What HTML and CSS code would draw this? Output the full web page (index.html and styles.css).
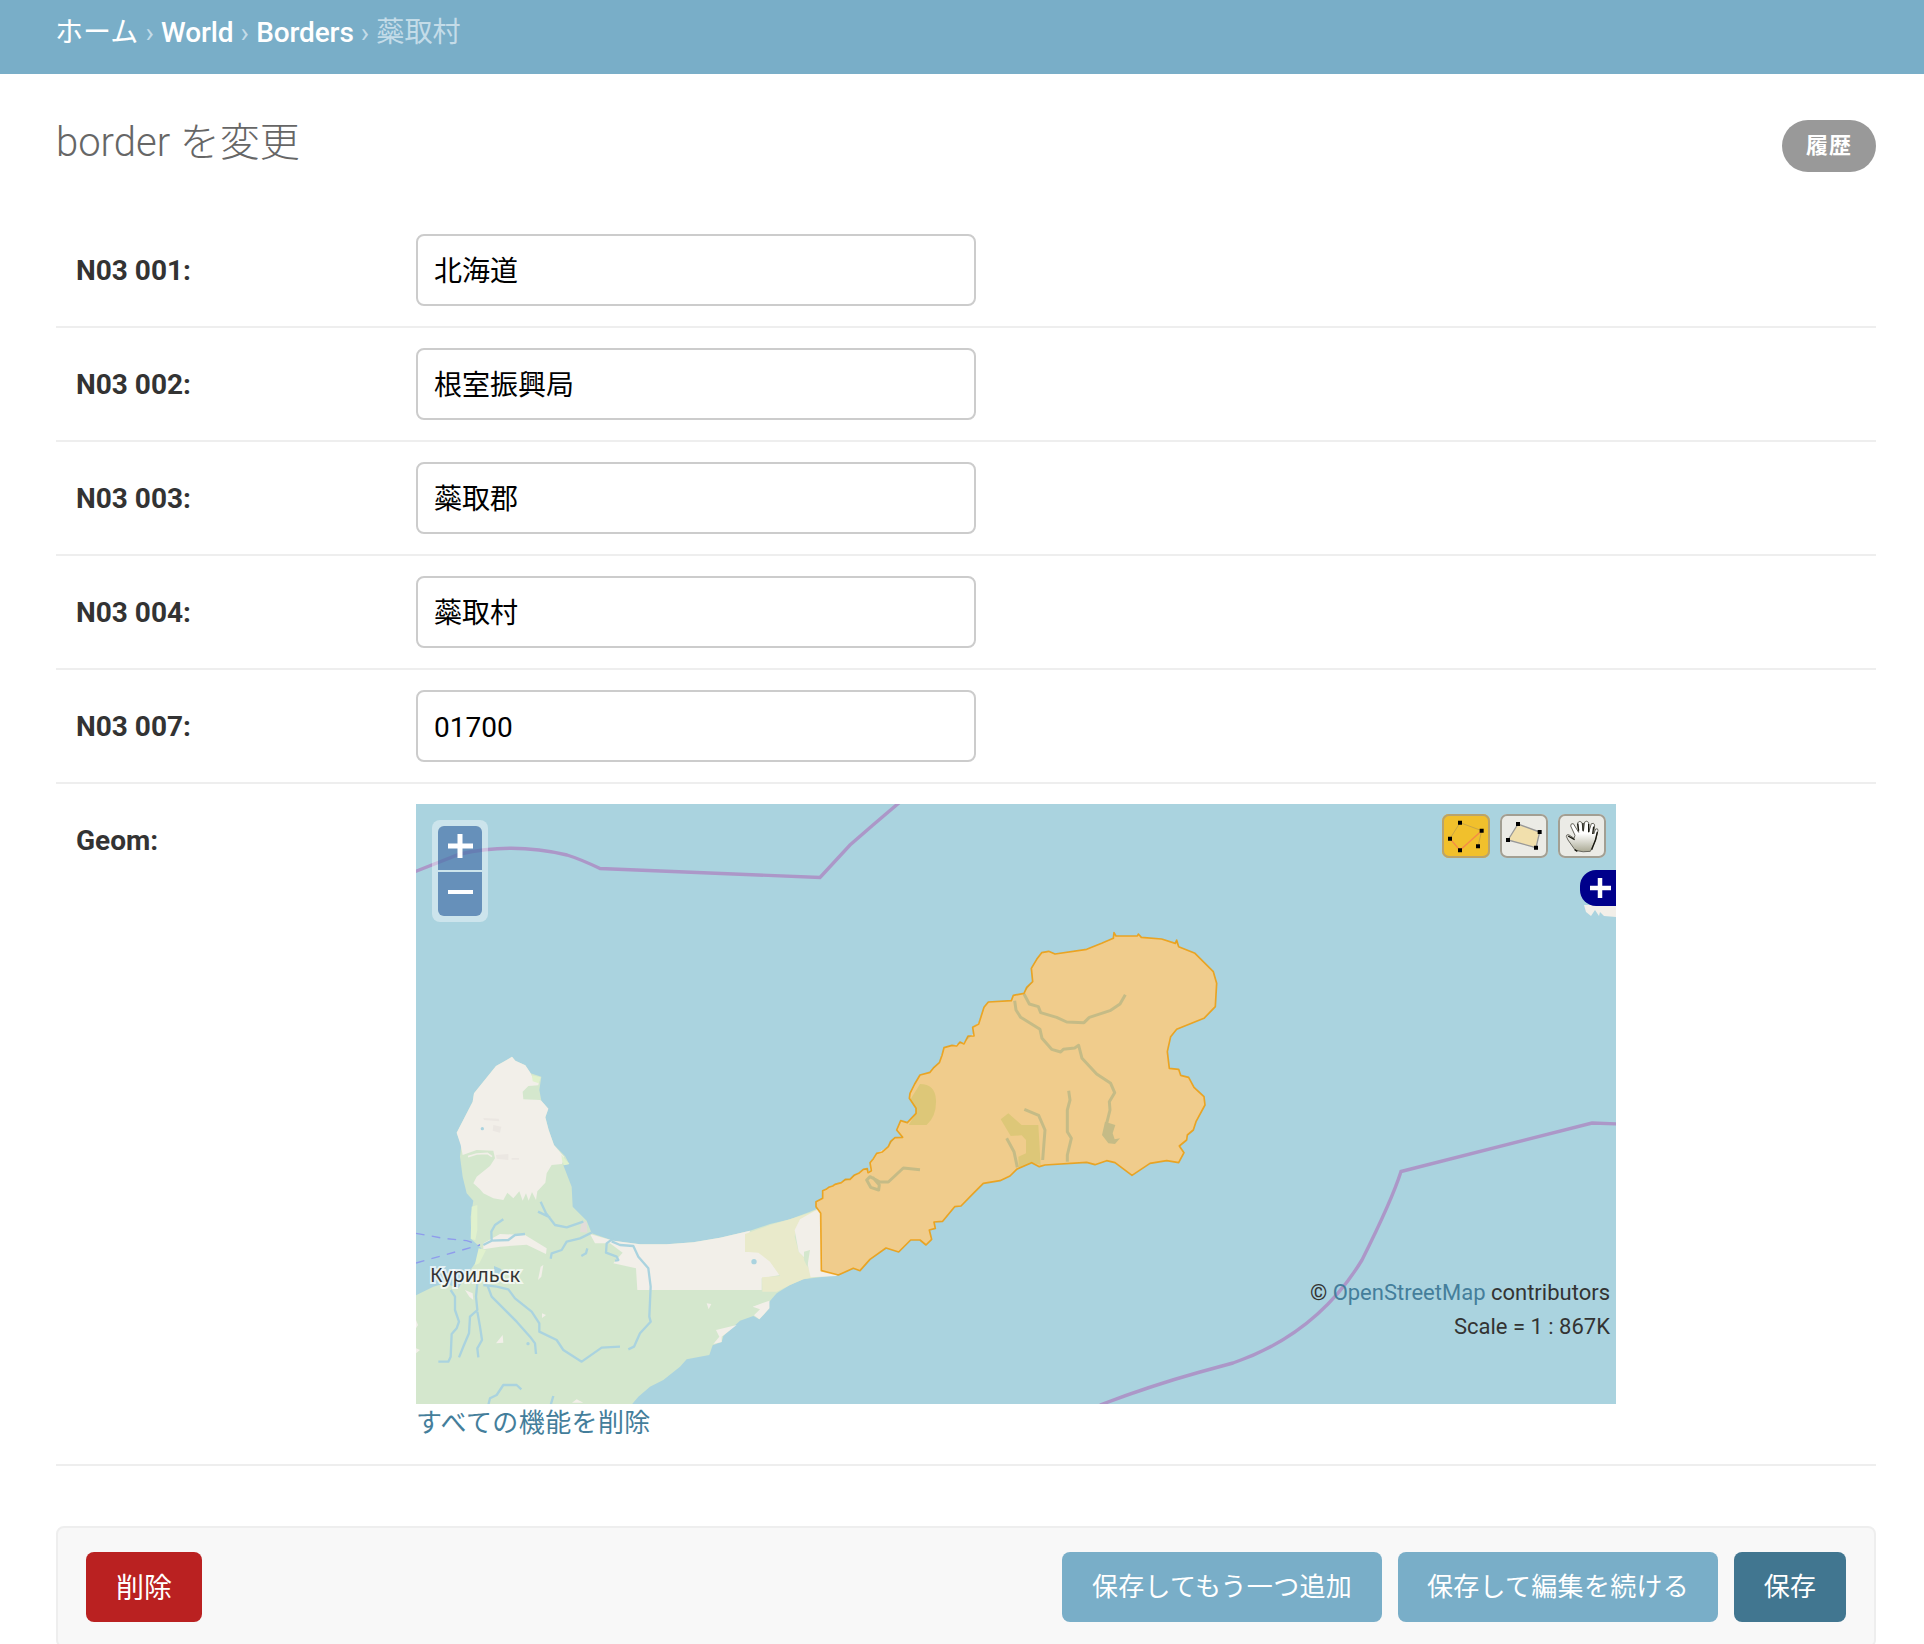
FILE: index.html
```html
<!DOCTYPE html>
<html lang="ja">
<head>
<meta charset="utf-8">
<title>border を変更</title>
<link rel="stylesheet" href="styles.css">
</head>
<body>
<nav class="breadcrumbs"><a href="#">ホーム</a> › <a class="latin" href="#">World</a> › <a class="latin" href="#">Borders</a> › 蘂取村</nav>
<main class="content">
  <header class="title-row">
    <h1>border を変更</h1>
    <a class="history" href="#">履歴</a>
  </header>
  <form class="form">
    <div class="row"><label for="f1">N03 001:</label><input id="f1" type="text" value="北海道"></div>
    <div class="row"><label for="f2">N03 002:</label><input id="f2" type="text" value="根室振興局"></div>
    <div class="row"><label for="f3">N03 003:</label><input id="f3" type="text" value="蘂取郡"></div>
    <div class="row"><label for="f4">N03 004:</label><input id="f4" type="text" value="蘂取村"></div>
    <div class="row"><label for="f7">N03 007:</label><input class="latin" id="f7" type="text" value="01700"></div>
    <div class="row geom">
      <label>Geom:</label>
      <div>
        <div class="map">
          <svg class="tiles" viewBox="416 804 1200 600" width="1200" height="600">
            <g transform="translate(400 1030) scale(.33333)">
              <!-- mainland -->
              <path class="wood" d="M48 796L100 770 135 760 175 775 210 722 232 690 244 655 214 628 212 560 220 512 200 490 188 440 180 380 184 345 170 308 218 215 222 190 288 108 320 90 336 80 346 92 376 106 392 130 424 140 418 180 424 212 445 236 436 262 446 300 462 345 495 378 508 402 490 406 515 470 518 530 560 572 575 610 640 632 720 643 800 643 880 637 960 623 1050 602 1110 582 1170 568 1230 545 1280 524 1310 525 1310 735 1260 742 1210 748 1170 765 1130 790 1108 815 1108 835 1078 868 1060 858 1020 872 970 918 965 936 938 946 928 975 860 988 840 1010 790 1050 750 1070 715 1100 690 1130H48z"/>
              <path class="land" d="M188 375L182 345 170 308 218 215 222 190 288 108 320 90 336 80 346 92 376 106 392 130 400 148 418 150 415 166 385 168 368 185 370 208 420 210 424 212 445 236 436 262 446 300 462 345 492 380 486 402 455 405 440 430 436 458 412 484 408 510 396 486 386 512 378 490 368 512 358 484 340 505 322 488 310 510 280 505 250 490 240 478 220 460 230 440 270 408 285 385 280 362 230 360z"/>
              <path class="land" d="M570 612L640 632 720 643 800 643 880 637 960 623 1050 602 1035 665 1090 665 1140 735 1085 745 1085 780H712L708 715 640 700 668 668 630 640 585 640zM250 640L300 612 375 615 440 655 438 672 380 644 300 650 250 658zM1058 830L1108 812 1108 835 1078 868 1062 856 1080 838zM948 900L1010 885 965 920 965 936 940 942 958 920zM422 710L430 705 424 740 414 750zM426 850L438 855 426 864zM195 780L218 790 220 810 208 800zM920 820L934 822 926 838zM288 940L308 915 310 938zM516 1118L530 1108 550 1118zM48 870L54 885 48 895zM48 955L60 960 48 970z"/>
              <path class="sand" d="M1035 612L1110 585 1170 568 1230 548 1280 524V580L1190 590 1184 620 1196 665 1210 680 1238 742 1210 748 1170 765 1130 785H1087L1086 742 1140 738 1110 695 1075 668 1035 665z"/>
              <path class="land" d="M1200 568L1240 545 1310 515V738L1232 742 1220 690 1196 665 1184 600z"/>
              <path class="wood" d="M1212 665L1230 660 1222 710 1212 690z"/>
              <path class="meadow" d="M396 136L422 142 416 160 398 154zM215 530L232 525 232 600 226 630 212 626zM236 655L258 660 238 700 224 706zM484 374L508 402 492 406 486 390z"/>
              <path class="rock" d="M545 575L560 575 562 608 540 606z"/>
              <path class="scree" d="M288 375L325 372V390L290 386zM280 285L304 290 300 308 278 302zM250 264L296 266 298 274 252 270zM335 384h22v5h-22z"/>
              <path class="land-line" d="M204 380L230 372 262 370 276 380"/>
              <path class="river" d="M310 568L285 585 274 605 275 634M250 645L275 632 325 630 345 615 375 612M422 515L438 550 465 585 500 592 550 575M414 545L450 562M575 608L540 625 500 635 485 660 455 670 452 686M562 655L558 670 544 678M640 625L620 640 618 668 650 680 655 690 645 692M635 634L660 645 700 648 715 680 745 715 752 770 748 860 752 875 720 910 702 950 685 958M152 780L165 800 165 840 177 875 170 895 155 912 152 980 145 995 115 995M232 760L228 800 232 840 210 860 207 910 192 945 177 982M232 845L240 890 246 930 232 955 235 982M250 765L290 770 325 778 345 805 395 845 418 880 418 905 470 930 490 960 545 995 605 953 660 950M262 765L275 800 320 845 350 875 390 920 405 940 408 972M265 1125L270 1105 290 1095 310 1065 350 1065 364 1078M460 1098L452 1125"/>
              <circle class="lake" cx="247" cy="296" r="5"/><circle class="lake" cx="1062" cy="695" r="8"/><circle class="lake" cx="384" cy="941" r="5"/>
              <path class="lake" d="M282 708l20 8 12 20-32-8z"/>
              <path class="ferry" d="M48 610L130 625 200 632 240 645M48 699L130 676 240 645"/>
            </g>
            <path class="land" d="M1584 905h32v12l-12-1-4-4-1 4-4-6-4 6-5-4z"/>
            <g transform="translate(780 900) scale(.33333)">
              <path class="land" id="island" d="M124 1112L122 940 108 920 108 905 128 895 128 872 165 853 210 838 250 808 272 815 270 788 290 760 325 740 345 713 368 712 350 690 362 662 382 668 408 640 408 625 388 595 390 580 420 525 450 517 478 488 492 443 552 428 582 400 578 382 596 368 612 322 625 306 694 302 700 286 732 280 758 245 754 205 785 158 806 154 825 162 920 148 965 130 1000 115 1002 98 1008 108 1072 108 1075 102 1084 112 1145 117 1190 130 1196 140 1245 160 1300 215 1310 250 1306 320 1272 355 1190 388 1172 410 1162 455 1168 505 1196 508 1202 526 1226 532 1242 562 1272 590 1275 615 1248 665 1240 690 1222 705 1220 720 1198 738 1212 758 1196 788 1160 782 1110 790 1056 826 1005 788 980 782 945 794 920 787 795 795 778 800 755 788 710 808 690 828 660 842 610 850 580 880 543 918 524 920 488 964 462 966 466 985 448 990 455 1018 438 1035 420 1020 392 1020 356 1056 318 1044 270 1078 240 1112 220 1105 175 1125z"/>
              <path class="dense" d="M420 552Q466 552 468 600T440 675L386 675 408 640 408 625 390 600zM685 640L725 675 775 675 782 795 755 788 716 804 715 770 738 760 738 720 725 706 692 708 662 658z"/>
              <path class="river wide" d="M732 282L748 312 775 320 782 338 830 352 860 366 912 368 928 352 990 332 1020 312 1036 284M704 302L708 330 722 352 780 388 786 415 815 448 842 456 850 448 884 444 896 436 906 475 950 522 992 550 1004 578 988 605 990 630 980 670M866 572L870 600 862 630 862 695 874 715 862 765 862 785M733 628L776 646 795 690 788 780M680 715L702 755 712 802M420 809L370 804 325 846 300 846 270 830 260 840 272 862 296 870 298 855 278 832"/>
              <path class="lake" d="M975 665L1006 675 998 700 1004 718 1020 715 1005 732 985 730 966 705z"/>
              <path class="feature" d="M124 1112L122 940 108 920 108 905 128 895 128 872 138 868 146 862 158 858 165 853 184 848 196 838 210 838 222 826 236 820 250 808 262 806 264 818 274 812 270 788 280 776 290 760 306 756 325 740 332 724 345 713 368 712 350 690 362 662 382 668 408 640 408 625 388 595 390 580 404 552 420 525 450 517 462 502 478 488 486 466 492 443 516 436 530 438 540 426 552 432 564 408 582 408 578 382 596 372 612 322 625 306 694 302 700 286 732 280 740 262 758 245 754 205 770 178 785 158 806 154 825 162 920 148 965 130 1000 115 1002 98 1008 108 1072 108 1075 102 1084 112 1145 117 1186 130 1190 120 1196 140 1245 160 1300 215 1310 250 1306 320 1272 355 1190 388 1172 410 1162 455 1168 505 1196 508 1202 526 1226 532 1242 562 1272 590 1275 615 1248 665 1240 690 1222 705 1220 720 1198 738 1212 758 1196 788 1160 782 1110 790 1056 826 1005 788 980 782 945 794 920 787 795 795 778 800 755 788 710 808 690 828 660 842 610 850 580 880 543 918 524 920 488 964 462 966 466 985 448 990 455 1018 438 1035 420 1020 392 1020 356 1056 318 1044 270 1078 240 1112 220 1105 175 1125z"/>
            </g>
            <path class="boundary" d="M414 872L460 854Q513 842 567 855Q580 859 600 868.5L820 877.5 850 845 873 825 900 802M1618 1124L1592 1123 1401 1171.5Q1392 1200 1362 1260Q1317 1334 1233 1363L1200 1372Q1150 1386 1100 1405"/>
            <text class="place" x="430" y="1281.5">Курильск</text>
          </svg>
          <div class="zoom"><button type="button" aria-label="+"><svg width="44" height="44"><path d="M10 20H35M22 8V32" stroke="#fff" stroke-width="5"/></svg></button><button type="button" aria-label="−"><svg width="44" height="44"><path d="M10 20H35" stroke="#fff" stroke-width="4"/></svg></button></div>
          <div class="tools">
            <button class="active" type="button"><svg viewBox="426 72 144 132" width="48" height="44" fill="none"><path d="M450 146L480 98 545 122 534 169" stroke="#c9a545" stroke-width="3"/><path d="M450 146L480 181 545 122" stroke="#f58a48" stroke-width="4"/><path d="M474 92h12v12h-12zM539 116h12v12h-12zM444 140h12v12h-12zM474 175h12v12h-12zM528 163h12v12h-12z" fill="#000"/></svg></button>
            <button type="button"><svg viewBox="600 72 144 132" width="48" height="44"><path d="M624 150L654 102 719 126 708 173z" fill="#f1dfac" stroke="#999" stroke-width="4"/><path d="M648 96h12v12h-12zM713 120h12v12h-12zM618 144h12v12h-12zM702 167h12v12h-12z" fill="#000"/></svg></button>
            <button type="button"><svg viewBox="774 72 144 132" width="48" height="44"><defs><linearGradient id="palm" x2="0" y2="1"><stop offset=".4" stop-color="#fff"/><stop offset="1" stop-color="#aaa994"/></linearGradient></defs><path d="M826 181L804 150 799 139Q799 133 806 134L822 145 825 136 812 108Q812 99 820 101L836 127 833 98Q840 90 846 98L850 124 854 96Q861 90 866 98L866 127 874 101Q882 97 884 105L881 132 887 117Q894 114 894 121L887 151 871 184Q850 188 826 181z" fill="url(#palm)" stroke="#68675e" stroke-width="3"/><path d="M833 101L836 122M849 99V122M866 102V126M881 110L878 132M892 126L886 151 875 179M804 138L824 149M824 179L832 184" fill="none" stroke="#17170f" stroke-width="4"/></svg></button>
          </div>
          <button class="layers" type="button" aria-label="+"><svg width="36" height="36"><path d="M10 18H31M20 8V28" stroke="#fff" stroke-width="4.5"/></svg></button>
          <div class="credits"><p>© <a href="#">OpenStreetMap</a> contributors</p><p>Scale = 1 : 867K</p></div>
        </div>
        <a class="clear" href="#">すべての機能を削除</a>
      </div>
    </div>
    <div class="submit-row">
      <a class="btn delete" href="#">削除</a>
      <button class="btn" type="button">保存してもう一つ追加</button>
      <button class="btn" type="button">保存して編集を続ける</button>
      <button class="btn primary" type="button">保存</button>
    </div>
  </form>
</main>
</body>
</html>
```

FILE: styles.css
```css
* { box-sizing: border-box; }
body {
  margin: 0;
  height: 1644px;
  overflow: hidden;
  background: #fff;
  color: #333;
  font-family: Roboto, "Noto Sans CJK JP", sans-serif;
  font-size: 28px;
}
a { color: #447e9b; text-decoration: none; }
button { font-family: inherit; border: 0; padding: 0; }

.breadcrumbs {
  height: 74px;
  padding: 12px 55px 0;
  background: #79aec8;
  color: #c4dce8;
  line-height: 42px;
  letter-spacing: .1px;
  white-space: nowrap;
}
.breadcrumbs a { color: #fff; }
.breadcrumbs .latin { font-weight: 500; letter-spacing: -.1px; }

.content { padding: 0 48px 0 56px; }
.title-row {
  display: flex;
  justify-content: space-between;
  align-items: flex-start;
  height: 140px;
  padding-top: 46px;
}
h1 {
  margin: -3px 0 0;
  color: #666;
  font-size: 40px;
  font-weight: 300;
  line-height: 52px;
}
.history {
  width: 94px;
  height: 52px;
  border-radius: 26px;
  background: #999;
  color: #fff;
  font-size: 22px;
  font-weight: 700;
  letter-spacing: 1px;
  line-height: 51px;
  text-align: center;
}

.row {
  display: flex;
  align-items: flex-start;
  padding: 20px 0 20px 20px;
  border-bottom: 2px solid #eee;
}
.row label {
  flex: 0 0 340px;
  font-weight: 700;
  line-height: 74px;
  height: 72px;
}
.row input {
  width: 560px;
  height: 72px;
  padding: 0 16px 3px;
  border: 2px solid #ccc;
  border-radius: 8px;
  background: #fff;
  color: #000;
  font: inherit;
}
.row input.latin { padding: 3px 16px 0; }
.geom { height: 682px; }

.map {
  position: relative;
  width: 1200px;
  height: 600px;
  background: #aad3df;
  overflow: hidden;
}
.tiles { display: block; }
.land { fill: #f2efe9; }
.wood { fill: #d4e7cd; }
.dense { fill: #d3e7c8; }
.sand { fill: #e9eacb; }
.meadow { fill: #e0f1cd; }
.rock { fill: #e2dcd9; }
.scree { fill: #ebe7e2; }
.lake { fill: #aad3df; }
.land-line { fill: none; stroke: #f2efe9; stroke-width: 5; }
.river { fill: none; stroke: #aad3df; stroke-width: 7; stroke-linejoin: round; }
.river.wide { stroke-width: 9; }
.ferry { fill: none; stroke: #8f9cec; stroke-width: 4; stroke-dasharray: 26 22; }
.feature { fill: #e90; fill-opacity: .4; stroke: #e90; stroke-width: 5; stroke-opacity: .8; stroke-linejoin: round; }
.boundary { fill: none; stroke: #ac97c8; stroke-width: 3.4; }
.place {
  fill: #333;
  stroke: #fff;
  stroke-opacity: .7;
  stroke-width: 4px;
  paint-order: stroke;
  font-family: "Noto Sans", sans-serif;
  font-size: 20px;
}

.zoom {
  position: absolute;
  left: 16px;
  top: 16px;
  display: grid;
  gap: 2px;
  padding: 6px;
  border-radius: 8px;
  background: rgba(255, 255, 255, .4);
}
.zoom button { width: 44px; height: 44px; background: rgba(0, 60, 136, .5); }
.zoom button:first-child { border-radius: 6px 6px 0 0; }
.zoom button:last-child { border-radius: 0 0 6px 6px; }
.zoom svg, .tools svg, .layers svg { display: block; }

.tools { position: absolute; right: 10px; top: 10px; display: flex; gap: 10px; }
.tools button {
  width: 48px;
  height: 44px;
  border-radius: 7px;
  background: #ebebe6;
  box-shadow: inset 0 0 0 2px #a29f93;
}
.tools .active { background: #f1c02c; box-shadow: inset 0 0 0 2px #b9a36c; }
.layers {
  position: absolute;
  right: 0;
  top: 66px;
  width: 36px;
  height: 36px;
  border-radius: 16px 0 0 16px;
  background: #00008b;
}
.credits {
  position: absolute;
  right: 6px;
  top: 472px;
  font-size: 22px;
  line-height: 34px;
  text-align: right;
}
.credits p { margin: 0; }
.clear { display: block; font-size: 26px; line-height: 39px; letter-spacing: .4px; }

.submit-row {
  display: flex;
  gap: 16px;
  height: 122px;
  margin-top: 60px;
  padding: 24px 28px;
  border: 2px solid #eee;
  border-radius: 8px;
  background: #f8f8f8;
}
.btn {
  width: 320px;
  height: 70px;
  border-radius: 8px;
  background: #79aec8;
  color: #fff;
  font-size: 26px;
  letter-spacing: .3px;
  line-height: 68px;
  text-align: center;
}
.btn.primary { width: 112px; background: #417690; }
.btn.delete { width: 116px; margin-right: auto; background: #ba2121; font-size: 28px; letter-spacing: 0; line-height: 73px; }
```
